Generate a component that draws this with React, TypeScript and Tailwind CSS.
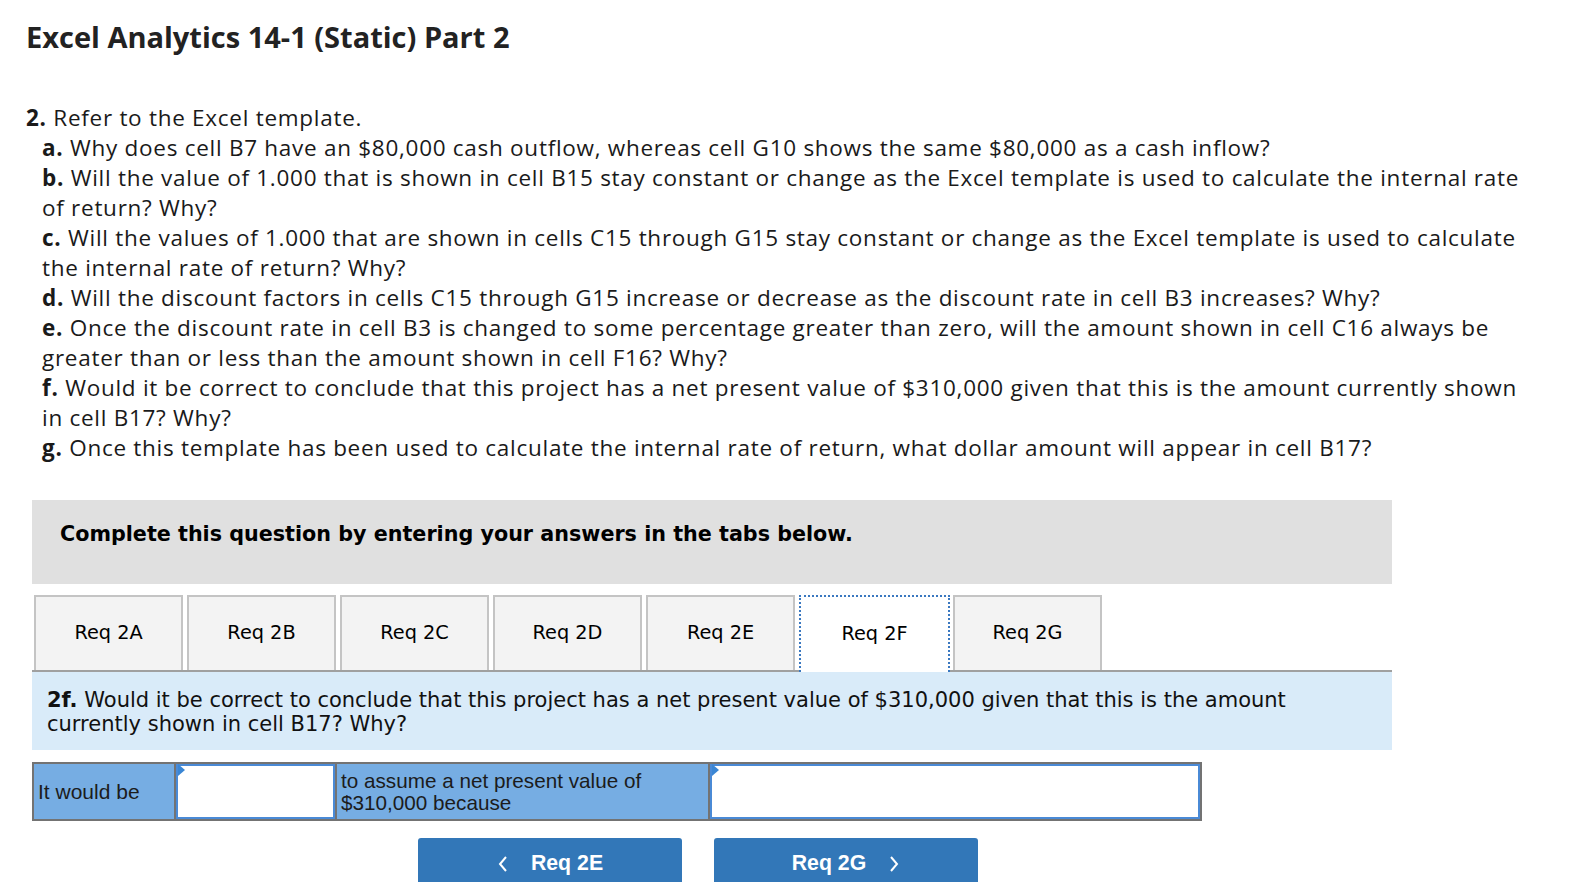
import React from "react";

const body = { fontFamily: "'Open Sans', Lato, sans-serif" };
const verdana = { fontFamily: "'DejaVu Sans', Verdana, sans-serif" };
const arial = { fontFamily: "'Liberation Sans', Arial, sans-serif" };

const items: [string, string[]][] = [
  ["a.", ["Why does cell B7 have an $80,000 cash outflow, whereas cell G10 shows the same $80,000 as a cash inflow?"]],
  ["b.", ["Will the value of 1.000 that is shown in cell B15 stay constant or change as the Excel template is used to calculate the internal rate", "of return? Why?"]],
  ["c.", ["Will the values of 1.000 that are shown in cells C15 through G15 stay constant or change as the Excel template is used to calculate", "the internal rate of return? Why?"]],
  ["d.", ["Will the discount factors in cells C15 through G15 increase or decrease as the discount rate in cell B3 increases? Why?"]],
  ["e.", ["Once the discount rate in cell B3 is changed to some percentage greater than zero, will the amount shown in cell C16 always be", "greater than or less than the amount shown in cell F16? Why?"]],
  ["f.", ["Would it be correct to conclude that this project has a net present value of $310,000 given that this is the amount currently shown", "in cell B17? Why?"]],
  ["g.", ["Once this template has been used to calculate the internal rate of return, what dollar amount will appear in cell B17?"]],
];

const tabs = ["Req 2A", "Req 2B", "Req 2C", "Req 2D", "Req 2E", "Req 2F", "Req 2G"];

function Corner() {
  return (
    <span className="absolute left-0 top-0 w-0 h-0 border-t-[6px] border-t-transparent border-b-[6px] border-b-transparent border-l-[7px] border-l-[#3a86d4]" style={{ transform: "translateY(-2px)" }} />
  );
}

export default function App() {
  return (
    <div className="w-[1584px] h-[882px] bg-white text-[#1a1a1a] overflow-hidden">
      <div className="pl-[26px] pt-[17px]" style={body}>
        <h1 className="text-[29px] font-bold leading-[40px] text-[#222]">Excel Analytics 14-1 (Static) Part 2</h1>
        <div className="mt-[46px] text-[22.5px] leading-[30px] tracking-[0.72px] whitespace-nowrap">
          <p><b>2.</b> Refer to the Excel template.</p>
          <div className="pl-[16px]">
            {items.map(([k, lines]) => (
              <div key={k}>
                {lines.map((l, i) => (
                  <p key={i}>{i === 0 ? <><b>{k}</b> {l}</> : l}</p>
                ))}
              </div>
            ))}
          </div>
        </div>
      </div>

      <div className="ml-[32px] mt-[37px] w-[1360px]">
        <div className="h-[84px] bg-[#e0e0e0] flex items-center pl-[28px] pb-[14px]">
          <span className="text-[20.7px] font-bold text-black" style={verdana}>Complete this question by entering your answers in the tabs below.</span>
        </div>

        <div className="mt-[12px] flex items-end border-b-2 border-[#a0a0a0] h-[76px] pl-[2px]" style={verdana}>
          {tabs.map((t, i) => {
            const active = i === 5;
            return (
              <div
                key={t}
                className={
                  active
                    ? "w-[151px] h-[77px] mb-[-2px] bg-white border-2 border-dotted border-[#3a78c0] border-b-0 flex items-center justify-center text-[19.3px] text-black mr-[3px]"
                    : "w-[149px] h-[75px] bg-[#f3f3f3] border-2 border-[#c4c4c4] border-b-0 flex items-center justify-center text-[19.3px] text-black mr-[4px]"
                }
              >
                {t}
              </div>
            );
          })}
        </div>

        <div className="bg-[#d9ebf9] h-[78px] pl-[15px] pt-[16px] text-[21px] leading-[24px] text-[#111]" style={verdana}>
          <p className="w-[1280px]"><b>2f.</b> Would it be correct to conclude that this project has a net present value of $310,000 given that this is the amount currently shown in cell B17? Why?</p>
        </div>

        <div className="mt-[12px] flex w-[1170px] h-[59px] border-2 border-[#737373] bg-[#76ade3]" style={arial}>
          <div className="w-[142px] flex items-center pl-[4px] text-[21px] text-[#1c1c1c] border-r-2 border-[#737373]">It would be</div>
          <div className="relative w-[159px] bg-white border-2 border-[#4a8ad6]"><Corner /></div>
          <div className="w-[375px] flex flex-col justify-center pl-[4px] text-[20.7px] leading-[22px] text-[#1c1c1c] border-l-2 border-r-2 border-[#737373]">
            <span>to assume a net present value of</span>
            <span>$310,000 because</span>
          </div>
          <div className="relative flex-1 bg-white border-2 border-[#4a8ad6]"><Corner /></div>
        </div>

        <div className="mt-[17px] flex gap-[32px] pl-[386px]" style={arial}>
          <button className="w-[264px] h-[54px] bg-[#3277b8] rounded-t-[3px] text-white font-bold text-[21.3px] flex items-center justify-center gap-[22px] pb-[3px]">
            <svg width="12" height="18" viewBox="0 0 12 18"><path d="M9 2 L3 9 L9 16" fill="none" stroke="white" strokeWidth="2" /></svg>
            <span>Req 2E</span>
          </button>
          <button className="w-[264px] h-[54px] bg-[#3277b8] rounded-t-[3px] text-white font-bold text-[21.3px] flex items-center justify-center gap-[22px] pb-[3px]">
            <span>Req 2G</span>
            <svg width="12" height="18" viewBox="0 0 12 18"><path d="M3 2 L9 9 L3 16" fill="none" stroke="white" strokeWidth="2" /></svg>
          </button>
        </div>
      </div>
    </div>
  );
}
